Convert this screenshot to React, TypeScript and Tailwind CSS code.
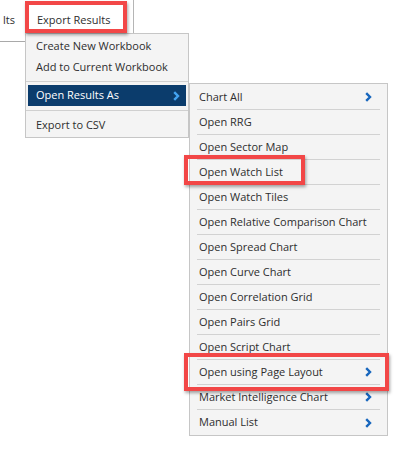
const subItems: { label: string; arrow?: boolean }[] = [
  { label: "Chart All", arrow: true },
  { label: "Open RRG" },
  { label: "Open Sector Map" },
  { label: "Open Watch List" },
  { label: "Open Watch Tiles" },
  { label: "Open Relative Comparison Chart" },
  { label: "Open Spread Chart" },
  { label: "Open Curve Chart" },
  { label: "Open Correlation Grid" },
  { label: "Open Pairs Grid" },
  { label: "Open Script Chart" },
  { label: "Open using Page Layout", arrow: true },
  { label: "Market Intelligence Chart", arrow: true },
  { label: "Manual List", arrow: true },
];

function Chevron({ color }: { color: string }) {
  return (
    <svg width="7" height="10" viewBox="0 0 7 10" className="shrink-0">
      <path d="M1.2 1.2 L5 5 L1.2 8.8" fill="none" stroke={color} strokeWidth="2.4" />
    </svg>
  );
}

export default function App() {
  return (
    <div
      className="relative h-[453px] w-[404px] overflow-hidden bg-white text-[11px] text-[#2e2e2e]"
      style={{ fontFamily: '"Open Sans", "Noto Sans", sans-serif' }}
    >
      {/* toolbar */}
      <div className="flex h-[42px] items-start">
        <div className="flex h-[42px] w-[25px] items-center justify-end border-b border-[#a9a9a9] pr-[10px]">
          <span className="whitespace-nowrap">lts</span>
        </div>
        <div className="flex h-[40px] w-[109px] items-center border-r border-[#b5b5b5] bg-white pl-[12px]">
          Export Results
        </div>
      </div>

      {/* export menu */}
      <div className="absolute left-[25px] top-[33px] w-[164px] border border-[#c6c6c6] bg-[#f4f4f4] pt-[2px] pb-px">
        <div className="flex h-[21px] items-center pl-[10px]">Create New Workbook</div>
        <div className="flex h-[21px] items-center pl-[10px]">Add to Current Workbook</div>
        <div className="my-[3px] h-px bg-[#d0d0d0]" />
        <div className="mx-[2px] flex h-[21px] items-center justify-between bg-[#0b3c6c] pl-[8px] pr-[6px] text-white">
          <span>Open Results As</span>
          <Chevron color="#43a3f2" />
        </div>
        <div className="my-[4px] h-px bg-[#d0d0d0]" />
        <div className="flex h-[21px] items-center pl-[10px]">Export to CSV</div>
      </div>

      {/* submenu */}
      <div className="absolute left-[189px] top-[83px] w-[199px] border border-[#c6c6c6] bg-[#f4f4f4] pt-[1px]">
        {subItems.map((it, i) => (
          <div key={it.label} className="mx-[7px]">
            <div
              className={
                "flex h-[25px] items-center justify-between pl-[2px] pr-[8px] " +
                (i < subItems.length - 1 ? "border-b border-[#d2d2d2]" : "")
              }
            >
              <span className="whitespace-nowrap">{it.label}</span>
              {it.arrow && <Chevron color="#1766bd" />}
            </div>
          </div>
        ))}
      </div>

      {/* highlight boxes */}
      <div className="absolute left-[25px] top-[1px] h-[32px] w-[102px] border-[4px] border-[#f24747] shadow-[1px_2px_3px_rgba(0,0,0,0.35)]" />
      <div className="absolute left-[184px] top-[155px] h-[30px] w-[121px] border-[4px] border-[#f24747] shadow-[1px_2px_3px_rgba(0,0,0,0.35)]" />
      <div className="absolute left-[184px] top-[353px] h-[38px] w-[205px] border-[4px] border-[#f24747] shadow-[1px_2px_3px_rgba(0,0,0,0.35)]" />
    </div>
  );
}
